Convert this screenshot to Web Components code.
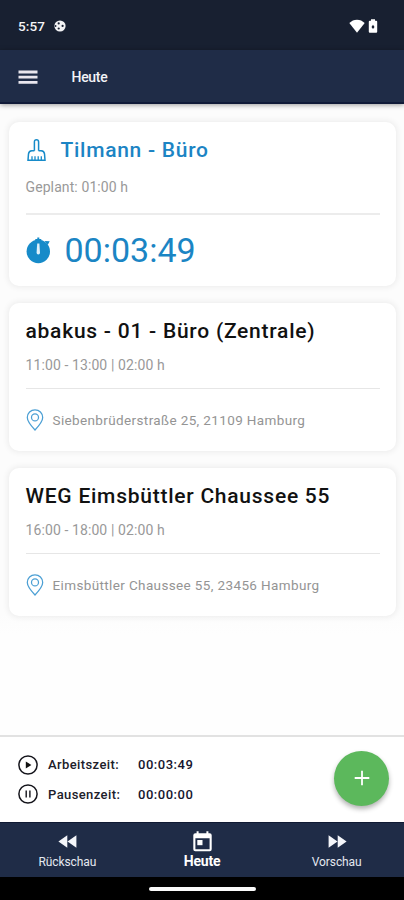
<!DOCTYPE html>
<html lang="de">
<head>
<meta charset="utf-8">
<title>Heute</title>
<style>
html,body{margin:0;height:100%}
body{font-family:Roboto,"Liberation Sans",sans-serif;overflow:hidden}
</style>
</head>
<body>
<day-app></day-app>
<script>
const icons = {
  menu: '<svg width="20" height="14" viewBox="0 0 20 14" fill="#e9e6ee"><path d="M.5 .5h19v3H.5zM.5 5.8h19v2.7H.5zM.5 11h19v2.7H.5z"/></svg>',
  ball: '<svg width="12" height="12" viewBox="0 0 12 12"><circle cx="6" cy="6" r="5.6" fill="#f3f3f5"/><g fill="#182031"><circle cx="4.7" cy="3.4" r="1.1"/><circle cx="8.6" cy="5.9" r="1.1"/><circle cx="4.7" cy="8.5" r="1.1"/><circle cx="1.6" cy="6" r=".9"/></g></svg>',
  wifi: '<svg width="16" height="14" viewBox="0 0 16 14" fill="#fff"><path d="M8 13.7.3 4C2.500 1.900 5 .7 8 .7s5.500 1.200 7.700 3.300z"/></svg>',
  battery: '<svg width="10" height="14" viewBox="0 0 10 14"><path d="M3 .3h4v1.500h1.200q1 0 1 1v10q0 1-1 1H1.800q-1 0-1-1v-10q0-1 1-1H3z" fill="#fff"/><path d="M5 5.800 6.500 8 5 10 3.500 8z" fill="#182031"/></svg>',
  brush: '<svg width="20" height="24" viewBox="0 0 20 24" fill="none" stroke="#178bc9" stroke-width="1.500"><path d="M7.400 12.700V4q0-2.200 2.100-2.200t2.100 2.200v8.700M7.400 12.700H4.800Q1.900 13 1.500 15.800L1 22.300h17l-.5-6.500q-.4-2.800-3.300-3.100h-2.600"/><path d="M5 22v-3.800M8 22v-3.800M11.200 22v-3.800M14.300 22v-3.800" stroke-width="1.300"/></svg>',
  timer: '<svg width="25" height="27" viewBox="0 0 25 27"><circle cx="12.300" cy="14.500" r="11.700" fill="#178bc9"/><path d="M9.300 2h6v2h-6zM11.300.5h2v3h-2zM18.500 4l5.200.3-2 3.600z" fill="#178bc9"/><path d="M11.200 6.500h2.200l.6 9.300q0 1.700-1.700 1.700t-1.700-1.700z" fill="#e0f1fa"/></svg>',
  pin: '<svg width="18" height="22" viewBox="0 0 18 22" fill="none" stroke="#4b9fd4" stroke-width="1.250"><path d="M9 21Q1.300 12.800 1.300 8.500a7.700 7.700 0 0 1 15.400 0Q16.700 12.800 9 21z"/><circle cx="9" cy="8.400" r="3.500"/></svg>',
  play: '<svg width="20" height="20" viewBox="0 0 20 20"><circle cx="10" cy="10" r="9.100" fill="none" stroke="#15151c" stroke-width="1.500"/><path d="M7.800 6.400v7.200L13.400 10z" fill="#111"/></svg>',
  pause: '<svg width="20" height="20" viewBox="0 0 20 20" fill="none" stroke="#15151c"><circle cx="10" cy="10" r="9.100" stroke-width="1.500"/><path d="M8.200 6.500v7M11.900 6.500v7" stroke-width="1.400"/></svg>',
  plus: '<svg width="16" height="16" viewBox="0 0 16 16"><path d="M8 .7v14.600M.7 8h14.600" stroke="#fff" stroke-width="1.800"/></svg>',
  back: '<svg width="19" height="13" viewBox="0 0 19 13" fill="#f4f6fa"><path d="M9.300.3v12.400L.4 6.500zM18.400.3v12.400L9.500 6.500z"/></svg>',
  next: '<svg width="19" height="13" viewBox="0 0 19 13" fill="#f4f6fa"><path d="M.6.3v12.400l8.900-6.200zM9.700.3v12.400l8.900-6.200z"/></svg>',
  today: '<svg width="19" height="21" viewBox="0 0 19 21"><path d="M2.300 2.300H3.600V.3h2v2h7.800v-2h2v2h1.300q2 0 2 2v14q0 2-2 2H2.300q-2 0-2-2v-14q0-2 2-2zM2.400 7.200v11h14.200v-11z" fill="#fff" fill-rule="evenodd"/><path d="M4.300 9h5.200v5.200H4.300z" fill="#fff"/></svg>'
};

function define(name, css, html) {
  customElements.define(name, class extends HTMLElement {
    constructor() {
      super();
      const t = document.createElement('template');
      t.innerHTML = `<style>${css}</style>${html}`;
      this.attachShadow({mode: 'open'}).append(t.content.cloneNode(true));
    }
  });
}

customElements.define('ui-icon', class extends HTMLElement {
  connectedCallback() {
    if (this.shadowRoot) return;
    this.attachShadow({mode: 'open'}).innerHTML =
      `<style>:host{display:block;flex:none}svg{display:block}</style>${icons[this.getAttribute('name')]}`;
  }
});

define('status-bar', `
:host{display:flex;align-items:center;height:50px;box-sizing:border-box;padding:1px 26px 0 18px;background:#182031;color:#f6f6f8;font-size:13.500px;font-weight:500;letter-spacing:.15px}
.gap{flex:1}.ball{margin-left:9px}.bat{margin-left:4px}.wifi{margin-right:-.5px}`,
`<span>5:57</span><ui-icon class="ball" name="ball"></ui-icon><span class="gap"></span><ui-icon class="wifi" name="wifi"></ui-icon><ui-icon class="bat" name="battery"></ui-icon>`);

define('app-bar', `
:host{display:flex;align-items:center;gap:33.500px;height:54px;box-sizing:border-box;padding:2px 18px 0;background:#1f2c47;border-bottom:2px solid #101a38;box-shadow:0 1px 5px rgba(0,0,0,.4);position:relative;color:#f3f3f6;font-size:14px;font-weight:500;letter-spacing:-.3px}`,
`<ui-icon name="menu"></ui-icon><slot></slot>`);

define('job-card', `
:host{display:block;box-sizing:border-box;height:148px;padding:13.500px 16.500px 0;border-radius:10px;background:#fff;box-shadow:0 0 6px 1px rgba(0,0,0,.07)}
:host([active]){height:164px}
.title{display:flex;align-items:center;height:30px;font-size:21px;font-weight:500;letter-spacing:var(--title-ls,.75px);color:#111;white-space:nowrap}
.sub{height:18px;margin-top:10px;line-height:18px;font-size:14px;letter-spacing:.1px;color:#999}
.rule{height:1.500px;margin-top:13.500px;background:#e6e6e6}
.detail{display:flex;align-items:center;height:61px;color:#949494;font-size:13.500px;letter-spacing:var(--detail-ls,.37px)}
:host([active]) .title{color:#1c84c4}
:host([active]) .sub{margin-top:12.500px}
:host([active]) .rule{height:2px;margin-top:17px;background:#ececec}
:host([active]) .detail{height:71px;font-size:34px;color:#1b85c4}`,
`<div class="title"><slot name="title"></slot></div><div class="sub"><slot name="sub"></slot></div><div class="rule"></div><div class="detail"><slot></slot></div>`);

define('time-row', `
:host{display:flex;align-items:center;height:29.500px;font-size:13px;font-weight:500;color:#20202a}
.label{width:90px;margin-left:10px;letter-spacing:.4px}.value{color:#15152e;letter-spacing:.52px}`,
`<slot name="icon"></slot><span class="label"><slot name="label"></slot></span><span class="value"><slot></slot></span>`);

define('time-panel', `
:host{display:flex;justify-content:space-between;align-items:center;height:87px;box-sizing:border-box;border-top:2px solid #e2e2e2;background:#fff;padding:0 15px 0 18px}
.fab{display:grid;place-items:center;width:55px;height:55px;border:0;padding:0;border-radius:50%;background:#5cb85c;box-shadow:0 3px 5px rgba(0,0,0,.3);margin-top:-3px}`,
`<div><slot></slot></div><button class="fab" aria-label="Hinzufügen"><ui-icon name="plus"></ui-icon></button>`);

define('nav-item', `
:host{display:flex;flex-direction:column;align-items:center;flex:1;color:#e4e8f0;font-size:12px;letter-spacing:-.1px}
.icon{display:flex;align-items:center;height:24px;margin-top:7px}
.label{line-height:16px;margin-top:1px}
:host([active]){font-weight:700;color:#fff;font-size:14px;letter-spacing:-.2px}
:host([active]) .label{margin-top:0}`,
`<span class="icon"><slot name="icon"></slot></span><span class="label"><slot></slot></span>`);

define('nav-bar', `
:host{display:flex;height:55px;box-sizing:border-box;background:#1f2c47;box-shadow:inset 0 1px #101a33}`, `<slot></slot>`);

define('home-bar', `
:host{display:flex;justify-content:center;align-items:center;height:23px;background:#000}
span{width:107px;height:4px;border-radius:2px;background:#fafafa}`, `<span></span>`);

define('day-app', `
:host{display:flex;flex-direction:column;height:900px;width:404px;background:#fff}
main{flex:1;display:flex;flex-direction:column;gap:17px;padding:17.500px 8px 0 9px;background:linear-gradient(#fcfcfc 510px,#fefefe 530px)}
.t1{margin-left:13.500px}.clock{margin-left:13.500px}.brush{margin-left:1.500px}.pin{margin-left:.5px}.addr{margin-left:8.500px}.timer{margin-left:.5px}.next{margin-left:2px}`,
`<status-bar></status-bar><app-bar>Heute</app-bar>
<main>
<job-card active style="--detail-ls:0px;--title-ls:.72px"><ui-icon slot="title" class="brush" name="brush"></ui-icon><span slot="title" class="t1">Tilmann - Büro</span><span slot="sub">Geplant: 01:00 h</span><ui-icon class="timer" name="timer"></ui-icon><span class="clock">00:03:49</span></job-card>
<job-card><span slot="title">abakus - 01 - Büro (Zentrale)</span><span slot="sub">11:00 - 13:00 | 02:00 h</span><ui-icon class="pin" name="pin"></ui-icon><span class="addr">Siebenbrüderstraße 25, 21109 Hamburg</span></job-card>
<job-card><span slot="title">WEG Eimsbüttler Chaussee 55</span><span slot="sub">16:00 - 18:00 | 02:00 h</span><ui-icon class="pin" name="pin"></ui-icon><span class="addr">Eimsbüttler Chaussee 55, 23456 Hamburg</span></job-card>
</main>
<time-panel><time-row><ui-icon slot="icon" name="play"></ui-icon><span slot="label">Arbeitszeit:</span>00:03:49</time-row><time-row><ui-icon slot="icon" name="pause"></ui-icon><span slot="label">Pausenzeit:</span>00:00:00</time-row></time-panel>
<nav-bar><nav-item><ui-icon slot="icon" name="back"></ui-icon>Rückschau</nav-item><nav-item active><ui-icon slot="icon" name="today"></ui-icon>Heute</nav-item><nav-item><ui-icon slot="icon" class="next" name="next"></ui-icon>Vorschau</nav-item></nav-bar>
<home-bar></home-bar>`);
</script>
</body>
</html>
